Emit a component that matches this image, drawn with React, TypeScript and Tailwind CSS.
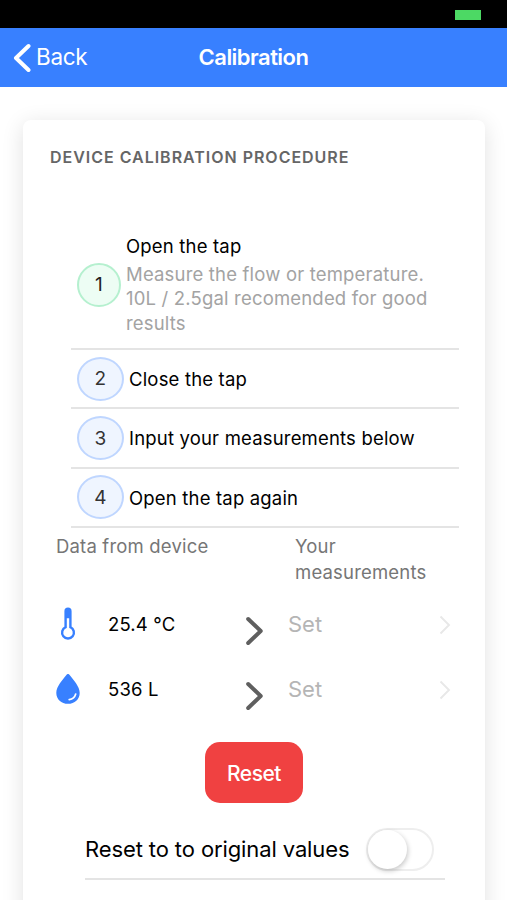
import React from 'react';

interface Step {
  id: number;
  title: string;
}

interface Reading {
  id: string;
  value: string;
  icon: React.ReactNode;
}

const ThermometerIcon = () => (
  <svg viewBox="0 0 16 34" className="h-[34px] w-4" fill="none">
    <path
      d="M5.6 4.2a2.4 2.4 0 0 1 4.8 0v16a5.9 5.9 0 1 1-4.8 0z"
      stroke="#3880ff"
      strokeWidth="2.4"
    />
    <path d="M5 4.2a3 3 0 0 1 6 0v7H5z" fill="#3880ff" />
  </svg>
);

const WaterIcon = () => (
  <svg viewBox="0 0 24 30" className="h-[30px] w-6">
    <path
      d="M13.2.5a1.7 1.7 0 0 0-2.4 0C6.6 5.6.3 12.6.3 18.9.3 25.2 5.3 29.8 12 29.8s11.7-4.6 11.7-10.9C23.7 12.6 17.4 5.6 13.2.5z"
      fill="#3880ff"
    />
    <path d="M13.2 25.6c3.4-.5 5.7-2.6 6.5-5.6" stroke="#fff" strokeWidth="1.7" strokeLinecap="round" fill="none" />
  </svg>
);

const steps: Step[] = [
  { id: 2, title: 'Close the tap' },
  { id: 3, title: 'Input your measurements below' },
  { id: 4, title: 'Open the tap again' },
];

const readings: Reading[] = [
  { id: 'temperature', value: '25.4 °C', icon: <ThermometerIcon /> },
  { id: 'volume', value: '536 L', icon: <WaterIcon /> },
];

const Header = () => (
  <header className="grid h-[59px] grid-cols-[1fr_auto_1fr] items-center bg-[#3880ff] text-white">
    <button className="flex items-center pl-[13px]">
      <svg viewBox="0 0 18 30" className="h-[30px] w-[18px]" fill="none">
        <path d="M15.5 3 3 15l12.5 12" stroke="currentColor" strokeWidth="4" strokeLinecap="round" strokeLinejoin="round" />
      </svg>
      <span className="mt-[-1px] ml-[5px] text-[22.5px] tracking-[-0.3px]">Back</span>
    </button>
    <h1 className="text-[22px] font-semibold tracking-[-0.53px]">Calibration</h1>
  </header>
);

const ReadingRow: React.FC<{ reading: Reading }> = ({ reading }) => (
  <div className="flex h-[65px] items-center">
    <div className="mb-[2px] flex w-6 justify-center">{reading.icon}</div>
    <span className="ml-7 w-[138px] text-[18.5px] tracking-[0.15px] whitespace-nowrap text-black">{reading.value}</span>
    <svg viewBox="0 0 18 30" className="mt-[13px] h-[30px] w-[18px]" fill="none">
      <path d="M2.2 3 14.7 15 2.2 27" stroke="#5f5f5f" strokeWidth="4" strokeLinecap="round" strokeLinejoin="round" />
    </svg>
    <button className="ml-6 flex flex-1 items-center justify-between">
      <span className="text-[22px] text-[#b5b5b5]">Set</span>
      <svg viewBox="0 0 12 20" className="mt-px h-5 w-3" fill="none">
        <path d="M1.5 1.5 10 10l-8.5 8.5" stroke="#e8e8e8" strokeWidth="1.9" />
      </svg>
    </button>
  </div>
);

const App: React.FC = () => {
  return (
    <div className="h-[900px] overflow-hidden bg-white font-['Inter',sans-serif]">
      {/* Status bar */}
      <div className="flex h-7 justify-end bg-black pt-[10px] pr-[26px]">
        <div className="h-[10px] w-[26px] bg-[#4cd964]" />
      </div>

      <Header />

      <main className="mt-[33px] mr-[22px] ml-[23px] h-[900px] rounded-lg bg-white shadow-[0_4px_22px_rgba(0,0,0,0.12)]">
        <h2 className="pt-[25px] pl-[27px] text-[16px] leading-6 font-semibold tracking-[0.98px] text-[#666]">
          DEVICE CALIBRATION PROCEDURE
        </h2>

        {/* Procedure steps */}
        <ol className="mt-[65px] mr-[26px] ml-12 tracking-[0.18px]">
          <li className="flex h-[116px] items-center border-b-2 border-[#e4e4e4] pl-[6px]">
            <div className="mt-[-12px] flex h-11 w-11 items-center justify-center rounded-full border-2 border-[#b5f0cf] bg-[#edfdf4] text-[19px] text-[#222]">
              1
            </div>
            <div className="mt-[-16px] ml-[5px] whitespace-nowrap">
              <div className="text-[18.5px] leading-[31px] text-black">Open the tap</div>
              <p className="text-[18.5px] leading-[24.5px] text-[#a3a3a3]">
                Measure the flow or temperature.
                <br />
                10L / 2.5gal recomended for good
                <br />
                results
              </p>
            </div>
          </li>
          {steps.map((step) => (
            <li key={step.id} className="flex h-[59.4px] items-center border-b-2 border-[#e4e4e4] pl-[6px]">
              <div className="flex h-11 w-[47px] items-center justify-center rounded-[50%] border-2 border-[#bfd6ff] bg-[#eff5ff] pt-[2px] text-[19px] text-[#333]">
                {step.id}
              </div>
              <span className="mt-[2px] ml-[5px] text-[18.5px] whitespace-nowrap text-black">{step.title}</span>
            </li>
          ))}
        </ol>

        {/* Column labels */}
        <div className="mt-[5px] flex pl-[33px] text-[18.5px] leading-[26px] tracking-[0.18px] text-[#767676]">
          <span className="w-[239px]">Data from device</span>
          <span>
            Your
            <br />
            measurements
          </span>
        </div>

        <div className="mt-[7px] pr-[34px] pl-[33px]">
          {readings.map((reading) => (
            <ReadingRow key={reading.id} reading={reading} />
          ))}
        </div>

        <div className="mt-5 flex justify-center">
          <button className="h-[61px] w-[98px] rounded-[15px] bg-[#f04141] pt-[2px] text-[21px] font-medium tracking-[-0.5px] text-white">
            Reset
          </button>
        </div>

        {/* Factory reset toggle */}
        <div className="mt-[17px] mr-10 ml-[62px] flex h-[60px] items-center justify-between border-b-2 border-[#e4e4e4] pr-[11px]">
          <span className="text-[22px] tracking-[-0.11px] whitespace-nowrap text-black">Reset to to original values</span>
          <div className="flex h-[43px] w-[68px] items-center rounded-full border-2 border-[#eee] bg-white">
            <div className="h-[39px] w-[39px] rounded-full bg-white shadow-[1px_2px_5px_rgba(0,0,0,0.22)]" />
          </div>
        </div>
      </main>
    </div>
  );
};

export default App;
